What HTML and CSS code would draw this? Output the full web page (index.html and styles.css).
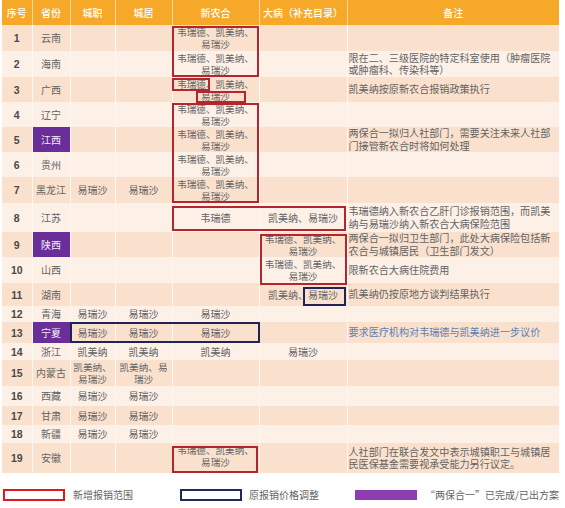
FILE: index.html
```html
<!DOCTYPE html>
<html lang="zh-CN">
<head>
<meta charset="utf-8">
<title>新农合报销范围</title>
<link rel="stylesheet" href="styles.css">
</head>
<body>
<div class="wrap">
  <table class="tbl">
    <colgroup>
      <col class="w-no"><col class="w-prov"><col class="w-cz"><col class="w-cj"><col class="w-xnh"><col class="w-db"><col class="w-note">
    </colgroup>
    <thead>
      <tr class="h25">
        <th>序号</th><th>省份</th><th>城职</th><th>城居</th><th>新农合</th><th>大病（补充目录）</th><th>备注</th>
      </tr>
    </thead>
    <tbody>
      <tr class="odd h26"><td class="no">1</td><td>云南</td><td></td><td></td><td class="ml">韦瑞德、凯美纳、<br>易瑞沙</td><td></td><td class="note"></td></tr>
      <tr class="even h26"><td class="no">2</td><td>海南</td><td></td><td></td><td class="ml">韦瑞德、凯美纳、<br>易瑞沙</td><td></td><td class="note">限在二、三级医院的特定科室使用（肿瘤医院<br>或肿瘤科、传染科等）</td></tr>
      <tr class="odd h25"><td class="no">3</td><td>广西</td><td></td><td></td><td class="ml">韦瑞德、凯美纳、<br>易瑞沙</td><td></td><td class="note">凯美纳按原新农合报销政策执行</td></tr>
      <tr class="even h25"><td class="no">4</td><td>辽宁</td><td></td><td></td><td class="ml">韦瑞德、凯美纳、<br>易瑞沙</td><td></td><td class="note"></td></tr>
      <tr class="odd h25"><td class="no">5</td><td class="purple">江西</td><td></td><td></td><td class="ml">韦瑞德、凯美纳、<br>易瑞沙</td><td></td><td class="note">两保合一拟归人社部门，需要关注未来人社部<br>门接管新农合时将如何处理</td></tr>
      <tr class="even h25"><td class="no">6</td><td>贵州</td><td></td><td></td><td class="ml">韦瑞德、凯美纳、<br>易瑞沙</td><td></td><td class="note"></td></tr>
      <tr class="odd h26"><td class="no">7</td><td>黑龙江</td><td>易瑞沙</td><td>易瑞沙</td><td class="ml">韦瑞德、凯美纳、<br>易瑞沙</td><td></td><td class="note"></td></tr>
      <tr class="even h29"><td class="no">8</td><td>江苏</td><td></td><td></td><td>韦瑞德</td><td>凯美纳、易瑞沙</td><td class="note">韦瑞德纳入新农合乙肝门诊报销范围，而凯美<br>纳与易瑞沙纳入新农合大病保险范围</td></tr>
      <tr class="odd h25"><td class="no">9</td><td class="purple">陕西</td><td></td><td></td><td></td><td class="ml">韦瑞德、凯美纳、<br>易瑞沙</td><td class="note">两保合一拟归卫生部门，此处大病保险包括新<br>农合与城镇居民（卫生部门发文）</td></tr>
      <tr class="even h26"><td class="no">10</td><td>山西</td><td></td><td></td><td></td><td class="ml">韦瑞德、凯美纳、<br>易瑞沙</td><td class="note">限新农合大病住院费用</td></tr>
      <tr class="odd h23"><td class="no">11</td><td>湖南</td><td></td><td></td><td></td><td>凯美纳、易瑞沙</td><td class="note">凯美纳仍按原地方谈判结果执行</td></tr>
      <tr class="even h16"><td class="no">12</td><td>青海</td><td>易瑞沙</td><td>易瑞沙</td><td>易瑞沙</td><td></td><td class="note"></td></tr>
      <tr class="odd h21"><td class="no">13</td><td class="purple">宁夏</td><td>易瑞沙</td><td>易瑞沙</td><td>易瑞沙</td><td></td><td class="note blue">要求医疗机构对韦瑞德与凯美纳进一步议价</td></tr>
      <tr class="even h17"><td class="no">14</td><td>浙江</td><td>凯美纳</td><td>凯美纳</td><td>凯美纳</td><td>易瑞沙</td><td class="note"></td></tr>
      <tr class="odd h26"><td class="no">15</td><td>内蒙古</td><td class="ml">凯美纳、<br>易瑞沙</td><td class="ml">凯美纳、易<br>瑞沙</td><td></td><td></td><td class="note"></td></tr>
      <tr class="even h20"><td class="no">16</td><td>西藏</td><td>易瑞沙</td><td>易瑞沙</td><td></td><td></td><td class="note"></td></tr>
      <tr class="odd h19"><td class="no">17</td><td>甘肃</td><td>易瑞沙</td><td>易瑞沙</td><td></td><td></td><td class="note"></td></tr>
      <tr class="even h18"><td class="no">18</td><td>新疆</td><td>易瑞沙</td><td>易瑞沙</td><td></td><td></td><td class="note"></td></tr>
      <tr class="odd h30"><td class="no">19</td><td>安徽</td><td></td><td></td><td class="ml">韦瑞德、凯美纳、<br>易瑞沙</td><td></td><td class="note">人社部门在联合发文中表示城镇职工与城镇居<br>民医保基金需要视承受能力另行议定。</td></tr>
    </tbody>
  </table>

  <div class="mark red b1"></div>
  <div class="mark red b2"></div>
  <div class="mark red b3"></div>
  <div class="mark red b4"></div>
  <div class="mark red b5"></div>
  <div class="mark red b6"></div>
  <div class="mark navy b7"></div>
  <div class="mark navy b8"></div>
  <div class="mark red b9"></div>

  <div class="legend">
    <div class="item i1"><span class="sw sw-red"></span><span class="lt">新增报销范围</span></div>
    <div class="item i2"><span class="sw sw-navy"></span><span class="lt">原报销价格调整</span></div>
    <div class="item i3"><span class="sw sw-purple"></span><span class="lt">“两保合一”已完成/已出方案</span></div>
  </div>
</div>
</body>
</html>
```
FILE: styles.css
```css
html, body {
  margin: 0;
  padding: 0;
  background: #ffffff;
}
body {
  font-family: "Noto Sans CJK SC", "Noto Sans", sans-serif;
  color: #636363;
}
.wrap {
  position: relative;
  width: 565px;
  height: 508px;
}
.tbl {
  border-collapse: collapse;
  table-layout: fixed;
  width: 557px;
  margin-left: 2px;
  font-size: 10px;
  line-height: 12px;
}
.w-no { width: 30px; }
.w-prov { width: 38px; }
.w-cz { width: 45px; }
.w-cj { width: 57px; }
.w-xnh { width: 87px; }
.w-db { width: 88px; }
.w-note { width: 212px; }

.tbl th {
  background: #f6a828;
  color: #ffffff;
  font-weight: 500;
  font-size: 10px;
  padding: 0;
  border-left: 1px solid #fbd9a0;
  text-align: center;
  vertical-align: middle;
  white-space: nowrap;
}
.tbl th:first-child { border-left: none; }
.tbl td {
  padding: 0;
  text-align: center;
  vertical-align: middle;
  border-left: 1px solid #fff7f1;
  white-space: nowrap;
}
.tbl td:first-child { border-left: none; }
.odd td { background: #fae1ce; }
.even td { background: #fdf0e7; }

.h16 { height: 16px; }
.h17 { height: 17px; }
.h18 { height: 18px; }
.h19 { height: 19px; }
.h20 { height: 20px; }
.h21 { height: 21px; }
.h23 { height: 23px; }
.h25 { height: 25px; }
.h26 { height: 26px; }
.h29 { height: 29px; }
.h30 { height: 30px; }

.tbl td.no {
  font-family: "Liberation Sans", Arial, sans-serif;
  font-weight: 700;
  font-size: 10.5px;
  color: #4a4a4a;
}
.tbl td.ml {
  vertical-align: top;
  padding-top: 1px;
  font-size: 9.6px;
  line-height: 12px;
}
.tbl td.note {
  text-align: left;
  padding-left: 1px;
  font-size: 10.1px;
  line-height: 12.5px;
}
.tbl td.note.blue { color: #5b7fb0; }
.tbl td.purple {
  background: #6a2e98;
  color: #f3ecf8;
}

.mark {
  position: absolute;
  box-sizing: border-box;
  border: 2px solid #b3262f;
}
.mark.navy { border-color: #1f2456; }
.b1 { left: 172px; top: 26px; width: 87px; height: 51px; }
.b2 { left: 172px; top: 78px; width: 38px; height: 13px; }
.b3 { left: 196px; top: 91px; width: 50px; height: 12px; }
.b4 { left: 172px; top: 103px; width: 87px; height: 100px; }
.b5 { left: 172px; top: 206px; width: 174px; height: 25px; }
.b6 { left: 260px; top: 234px; width: 87px; height: 51px; }
.b7 { left: 303px; top: 287px; width: 43px; height: 19px; }
.b8 { left: 70px; top: 322px; width: 190px; height: 21px; }
.b9 { left: 172px; top: 446px; width: 86px; height: 27px; }

.legend {
  display: grid;
  grid-template-columns: 177px 175px auto;
  margin: 16px 0 0 3px;
  font-size: 10px;
  line-height: 12px;
  color: #636363;
}
.item {
  display: flex;
  align-items: center;
  gap: 8px;
}
.i2 { gap: 7px; }
.sw {
  display: block;
  width: 62px;
  height: 12px;
  box-sizing: border-box;
}
.sw-red { border: 2px solid #e3161c; }
.sw-navy { border: 2px solid #1f2a5a; }
.sw-purple { background: #8c3db0; height: 10px; }
```
